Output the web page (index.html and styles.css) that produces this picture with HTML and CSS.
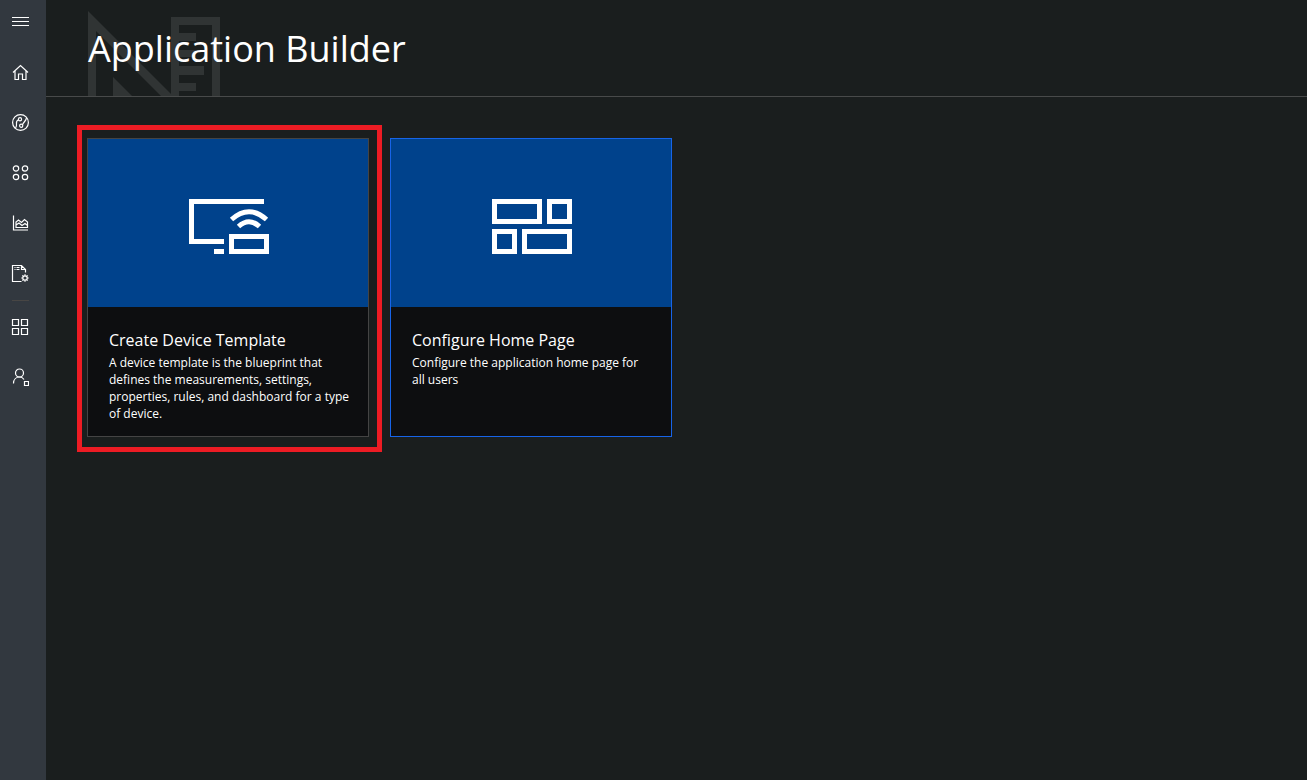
FILE: index.html
```html
<!DOCTYPE html>
<html lang="en">
<head>
<meta charset="utf-8">
<meta name="viewport" content="width=device-width, initial-scale=1">
<title>Application Builder</title>
<link rel="stylesheet" href="styles.css">
</head>
<body>
<div class="app">
  <nav class="sidebar" aria-label="Main">
    <button class="menu-toggle" type="button" aria-label="Toggle navigation">
      <svg class="icon" viewBox="0 0 18 18"><path d="M1 5.500h17M1 9.500h17M1 13.500h17"/></svg>
    </button>
    <a class="nav-link" href="#home" aria-label="Home">
      <svg class="icon" viewBox="0 0 18 18"><path d="M2 8.500 9.500 1.500 17 8.500M4 7v8.500h3.500v-5.500h4v5.500H15V7"/></svg>
    </a>
    <a class="nav-link" href="#explorer" aria-label="Device explorer">
      <svg class="icon" viewBox="0 0 18 18"><circle cx="9.500" cy="8.500" r="7.900"/><circle cx="9" cy="5.200" r="1.600"/><circle cx="10.200" cy="11.800" r="1.600"/><path d="M7.500 5.800C3 7.500 7.500 10.500 4.500 14M11.500 10.800C12.500 8 15.500 6.500 15.500 3.500"/></svg>
    </a>
    <a class="nav-link" href="#sets" aria-label="Device sets">
      <svg class="icon" viewBox="0 0 18 18"><circle cx="5" cy="4.500" r="2.700"/><circle cx="14" cy="4.500" r="2.700"/><circle cx="5" cy="13" r="2.700"/><circle cx="14" cy="13" r="2.700"/></svg>
    </a>
    <a class="nav-link" href="#analytics" aria-label="Analytics">
      <svg class="icon" viewBox="0 0 18 18"><path d="M2.500 1.500v14.500H17M5 13.500V8l2.500-2 3 2.500 3-3 3 2.500v5.500zM5 11l3-2 3 2.500 3-2 2.500 2"/></svg>
    </a>
    <a class="nav-link" href="#jobs" aria-label="Jobs">
      <svg class="icon" viewBox="0 0 18 18"><path d="M10.500 17.500h-9V1.500h9l4 4v3M10.500 1.500v4h4M3.500 3.500h1M5.500 3.500h3M3.500 5.500h1M5.500 5.500h3"/><circle cx="14" cy="14" r="2.200"/><path d="M14 10.300v1.500M14 16.200v1.500M10.300 14h1.500M16.200 14h1.500M11.400 11.400l1 1M15.600 15.600l1 1M11.400 16.600l1-1M15.600 12.400l1-1"/></svg>
    </a>
    <hr class="nav-divider">
    <a class="nav-link" href="#builder" aria-label="Application Builder" aria-current="page">
      <svg class="icon" viewBox="0 0 18 18"><path d="M1.500 1.500h6v6h-6zM10.500 1.500h6v6h-6zM1.500 10.500h6v6h-6zM10.500 10.500h6v6h-6z"/></svg>
    </a>
    <a class="nav-link" href="#administration" aria-label="Administration">
      <svg class="icon" viewBox="0 0 18 18"><circle cx="8.500" cy="5" r="4"/><path d="M2.500 15.500C2.500 11 5.500 9 8.500 9c2 0 3.500.8 4.500 2.500M13.500 13.500h4v4h-4z"/></svg>
    </a>
  </nav>
  <div class="page">
    <header class="page-header">
      <svg class="watermark" viewBox="0 0 132 85" aria-hidden="true"><path fill-rule="evenodd" d="M0 85V0L83 83V6h49v79h-8V14H91v8h17v8H91v9h17v7H91v9h25v9H91v8h17v8H91v5H73L8 20v65zM25 85V66l19 19z"/></svg>
      <h1 class="page-title">Application Builder</h1>
    </header>
    <main class="cards">
      <a class="card card-highlighted" href="#create-template">
        <span class="card-art">
          <svg class="tile-icon" viewBox="0 0 80 56" aria-hidden="true"><path d="M0 0h75v5H5v35h30v5H0zM25 50h10v5H25zM40 35h40v20H40zM45 40v10h30V40z" fill-rule="evenodd"/><path class="wave" d="M42.500 20.500Q60 5 77.500 20.500M49.500 27.500Q60 18 70.500 27.500"/></svg>
        </span>
        <span class="card-body">
          <span class="card-title">Create Device Template</span>
          <span class="card-text">A device template is the blueprint that defines the measurements, settings, properties, rules, and dashboard for a type of device.</span>
        </span>
      </a>
      <a class="card" href="#configure-home">
        <span class="card-art">
          <svg class="tile-icon" viewBox="0 0 80 56" aria-hidden="true"><path fill-rule="evenodd" d="M0 0h50v25H0zM5 5v15h40V5zM55 0h25v25H55zM60 5v15h15V5zM0 30h25v25H0zM5 35v15h15V35zM30 30h50v25H30zM35 35v15h40V35z"/></svg>
        </span>
        <span class="card-body">
          <span class="card-title">Configure Home Page</span>
          <span class="card-text">Configure the application home page for all users</span>
        </span>
      </a>
    </main>
  </div>
</div>
</body>
</html>
```
FILE: styles.css
```css
* {
  box-sizing: border-box;
}

body {
  margin: 0;
  background: #1a1e1e;
  color: #fff;
  font-family: "Open Sans", "Noto Sans", sans-serif;
}

.app {
  display: flex;
  min-height: 100vh;
}

.sidebar {
  display: flex;
  flex-direction: column;
  flex: none;
  width: 46px;
  background: #32383f;
}

.menu-toggle,
.nav-link {
  display: flex;
  align-items: center;
  height: 50px;
  padding: 0 0 0 11px;
}

.menu-toggle {
  height: 42px;
  margin-bottom: 6px;
  border: 0;
  background: none;
}

.icon {
  width: 18px;
  height: 18px;
  fill: none;
  stroke: #fff;
  stroke-width: 1.2;
}

.nav-divider {
  width: 17px;
  height: 1px;
  margin: 2px 0 1px 12px;
  border: 0;
  background: #484644;
}

.page {
  flex: 1;
  min-width: 0;
}

.page-header {
  display: grid;
  align-items: end;
  height: 97px;
  padding-left: 42px;
  border-bottom: 1px solid #484a4a;
}

.watermark,
.page-title {
  grid-area: 1 / 1;
}

.watermark {
  width: 132px;
  height: 85px;
  fill: #303434;
}

.page-title {
  margin: 0;
  padding-bottom: 21px;
  font-size: 36px;
  line-height: 52px;
  font-weight: 400;
}

.cards {
  display: flex;
  flex-wrap: wrap;
  gap: 21px;
  padding: 41px;
}

.card {
  position: relative;
  display: flex;
  flex-direction: column;
  width: 282px;
  border: 1px solid #1764e8;
  background: #0d0e10;
  color: #fff;
  text-decoration: none;
}

.card-highlighted {
  border-color: #444;
}

.card-highlighted::after {
  content: "";
  position: absolute;
  inset: -14px -14px -16px -11px;
  border: 5px solid #ed1c24;
  pointer-events: none;
}

.card-art {
  display: flex;
  align-items: center;
  justify-content: center;
  height: 168px;
  padding: 8px 0 0 2px;
  background: #00428c;
}

.tile-icon {
  width: 80px;
  height: 56px;
  fill: #fff;
}

.wave {
  fill: none;
  stroke: #fff;
  stroke-width: 5;
}

.card-body {
  display: flex;
  flex-direction: column;
  gap: 2px;
  padding: 21px 18px 14px 21px;
}

.card-title {
  font-size: 16px;
  line-height: 24px;
}

.card-text {
  font-size: 12px;
  line-height: 17px;
}
```
